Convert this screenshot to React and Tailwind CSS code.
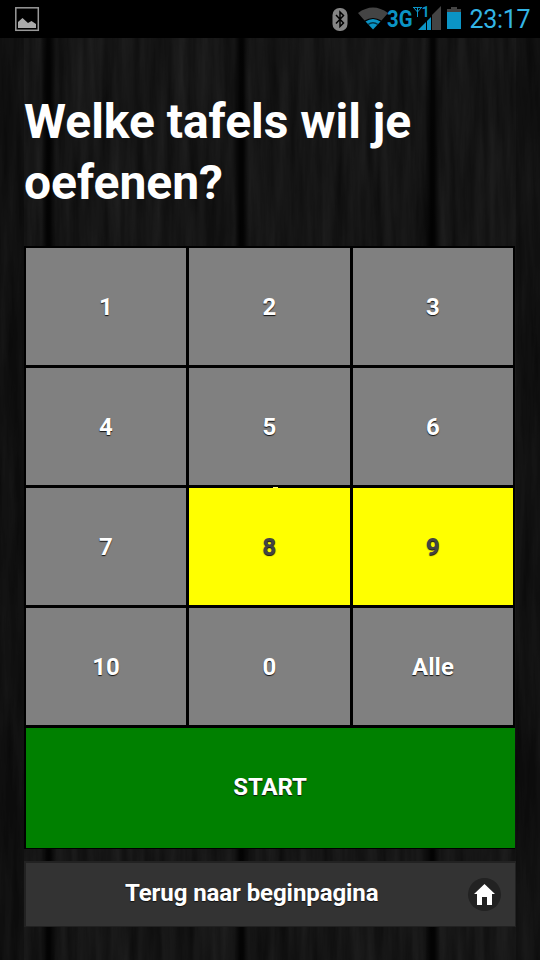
const cells = ['1', '2', '3', '4', '5', '6', '7', '8', '9', '10', '0', 'Alle'];
const selected = ['8', '9'];

function Wood() {
  return (
    <svg className="absolute inset-0 -z-10" width="540" height="960" aria-hidden="true">
      <defs>
        <filter id="grain" x="0" y="0" width="100%" height="100%" colorInterpolationFilters="sRGB">
          <feTurbulence type="fractalNoise" baseFrequency="0.09 0.007" numOctaves="4" seed="7" />
          <feColorMatrix values="0.1 0 0 0 0.034  0.1 0 0 0 0.034  0.1 0 0 0 0.034  0 0 0 0 1" />
        </filter>
        <linearGradient id="seam">
          <stop offset="0" stopColor="#000" stopOpacity="0" />
          <stop offset="0.4" stopColor="#000" stopOpacity="0.85" />
          <stop offset="0.6" stopColor="#000" stopOpacity="0.85" />
          <stop offset="1" stopColor="#000" stopOpacity="0" />
        </linearGradient>
      </defs>
      <rect width="540" height="960" filter="url(#grain)" />
      <rect x="0" width="24" height="960" fill="#000" opacity="0.25" />
      <rect x="41" width="15" height="960" fill="url(#seam)" />
      <rect x="234" width="15" height="960" fill="url(#seam)" />
      <rect x="425" width="15" height="960" fill="url(#seam)" />
      <rect x="516" width="24" height="960" fill="#000" opacity="0.2" />
    </svg>
  );
}

function StatusBar() {
  return (
    <header className="h-[38px] bg-black">
      <svg width="540" height="38" viewBox="0 0 540 38">
        <rect x="15.8" y="7.8" width="22.5" height="22.5" fill="none" stroke="#999" strokeWidth="1.5" />
        <path d="M18 28V22L22.500 18L28 23L31.500 21L36 24V28Z" fill="#aaa" />
        <rect x="332.500" y="8" width="15" height="23" rx="7" fill="#858585" />
        <path d="M336 15L343.500 23L340 26.500V12L343.500 15.500L336 23.500" fill="none" stroke="#000" strokeWidth="1.500" />
        <path d="M358 13Q373 2 388 13L381.500 20.500Q373 15.500 364.500 20.500Z" fill="#444" />
        <path d="M365.500 21.500Q373 16.500 380.500 21.500L373 29.500Z" fill="#0b94c5" />
        <path d="M368 24.500Q373 21 378 24.500" fill="none" stroke="#023548" strokeWidth="1.500" />
        <text x="387" y="27" textLength="25.500" lengthAdjust="spacingAndGlyphs" className="fill-[#0b94c5] font-[Roboto] text-[23px] font-bold">3G</text>
        <path d="M413 7.500H422M414 8L417.500 12L421 8M417.500 7V17" fill="none" stroke="#0b94c5" />
        <text x="421.500" y="17" className="fill-[#0b94c5] font-[Roboto] text-[14px] font-bold">1</text>
        <path d="M418 30L426 22V30ZM427 21L431 17V30H427Z" fill="#0b94c5" />
        <path d="M432 15L441 6V30H432Z" fill="#444" />
        <path d="M447 9H451V7H457V9H461V12H447Z" fill="#444" />
        <rect x="447" y="12" width="14" height="17" fill="#0b94c5" />
        <text x="469.500" y="28" textLength="61" className="fill-[#33b5e5] font-[Roboto] text-[25px] font-normal">23:17</text>
      </svg>
    </header>
  );
}

export default function App() {
  return (
    <div className="relative isolate h-[960px] w-[540px] overflow-hidden font-[Roboto,sans-serif] font-bold text-white">
      <Wood />
      <StatusBar />
      <main className="px-6">
        <h1 className="pt-[53px] text-[48px] leading-[61px] tracking-[-0.03px]">
          Welke tafels wil je
          <br />
          oefenen?
        </h1>
        <div className="relative mt-[33px] w-[491px] bg-black pb-px pl-[2px] pt-[2px] text-2xl leading-[30px] [text-shadow:0_1px_1px_#111]">
          <div className="grid grid-cols-[160px_161px_160px] gap-[3px]">
            {cells.map((label) => (
              <button
                key={label}
                className={
                  selected.includes(label)
                    ? 'h-[117px] bg-[#ffff00] text-[#444] [text-shadow:0_1px_1px_#111]'
                    : 'h-[117px] bg-[#808080] [text-shadow:0_1px_1px_#111]'
                }
              >
                {label}
              </button>
            ))}
          </div>
          <i className="absolute left-[249px] top-[241px] h-px w-[5px] bg-[#ffff77]" />
          <button className="mt-[3px] block h-[120px] w-[489px] bg-[#008000] pb-[2px] pr-px tracking-[-0.1px] [text-shadow:0_1px_1px_#111]">START</button>
        </div>
        <button className="mt-[12px] flex h-[66px] w-[492px] items-center border-2 border-b border-r border-[#222] bg-[#333] pl-[99px] text-2xl leading-[30px] tracking-[-0.08px] [text-shadow:0_1px_1px_#111]">
          <span className="mb-[4px] whitespace-nowrap">Terug naar beginpagina</span>
          <span className="ml-auto mr-[14px] size-[33px] rounded-full bg-[#222]">
            <svg width="33" height="33" viewBox="0 0 33 33">
              <path d="M16.500 6L27 16H24V27H19V19H14V27H9V16H6Z" fill="#fff" />
            </svg>
          </span>
        </button>
      </main>
    </div>
  );
}
